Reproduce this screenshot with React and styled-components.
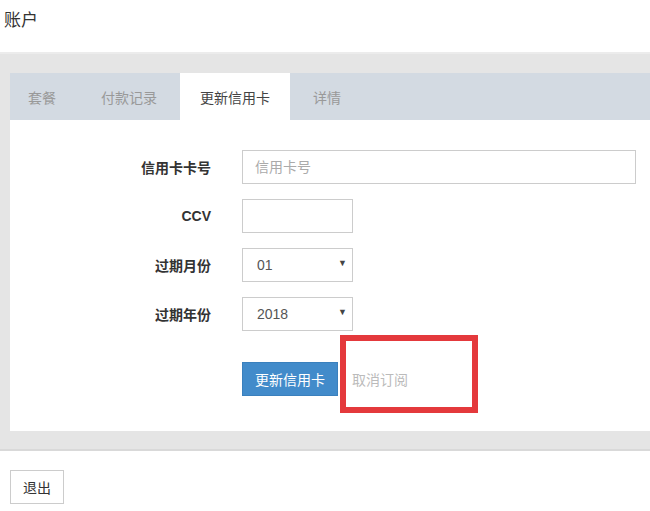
import React from 'react';
import styled, { createGlobalStyle } from 'styled-components';

const GlobalStyle = createGlobalStyle`
  body {
    margin: 0;
    background: #fff;
    font-family: "Liberation Sans", "Noto Sans CJK SC", sans-serif;
    font-size: 14px;
    color: #333;
  }
`;

const Page = styled.div`
  width: 650px;
  overflow: hidden;
`;

const Title = styled.h1`
  margin: 0;
  height: 52px;
  padding: 6px 0 0 4px;
  box-sizing: border-box;
  font-size: 17px;
  font-weight: normal;
  color: #333;
`;

const Band = styled.div`
  background: #e5e5e5;
  border-top: 2px solid #ececec;
  border-bottom: 2px solid #d9d9d9;
  padding: 19px 0 18px 10px;
`;

const Panel = styled.div`
  background: #fff;
  width: 660px;
`;

const TabBar = styled.div`
  display: flex;
  height: 47px;
  background: #d3dae2;
`;

const Tab = styled.div`
  display: flex;
  align-items: center;
  padding: 0 20px;
  margin-right: 3px;
  font-size: 14px;
  color: ${(p) => (p.$active ? '#444' : '#999')};
  background: ${(p) => (p.$active ? '#fff' : 'transparent')};
  &:first-child {
    padding-left: 18px;
  }
  &:nth-child(2) {
    padding-left: 22px;
  }
`;

const Form = styled.form`
  display: grid;
  grid-template-columns: 201px 1fr;
  column-gap: 31px;
  row-gap: 15px;
  padding: 30px 34px 35px 0;
`;

const Label = styled.label`
  align-self: center;
  text-align: right;
  font-weight: bold;
  font-size: 14px;
  color: #333;
`;

const Input = styled.input`
  box-sizing: border-box;
  height: 34px;
  width: ${(p) => p.$width || '100%'};
  padding: 6px 12px;
  border: 1px solid #ccc;
  font-family: inherit;
  font-size: 14px;
  color: #555;
  outline: none;
  &::placeholder {
    color: #aaa;
  }
`;

const SelectWrap = styled.div`
  position: relative;
  width: 111px;
  height: 34px;
`;

const Select = styled.select`
  box-sizing: border-box;
  appearance: none;
  width: 100%;
  height: 34px;
  padding: 0 14px;
  border: 1px solid #ccc;
  background: #fff;
  font-family: inherit;
  font-size: 14px;
  color: #555;
  outline: none;
`;

const Arrow = styled.span`
  position: absolute;
  right: 6px;
  top: 10px;
  font-size: 9px;
  color: #444;
  pointer-events: none;
`;

const Actions = styled.div`
  grid-column: 2;
  display: flex;
  align-items: center;
  margin-top: 16px;
`;

const PrimaryButton = styled.button`
  height: 34px;
  padding: 0 12px;
  border: 1px solid #3a80bd;
  background: #428bca;
  color: #fff;
  font-family: inherit;
  font-size: 14px;
`;

const CancelLink = styled.span`
  position: relative;
  margin-left: 14px;
  color: #bbb;
  font-size: 14px;
`;

const Highlight = styled.span`
  position: absolute;
  left: -12px;
  top: -34px;
  width: 126px;
  height: 66px;
  border: 6px solid #e4393c;
`;

const Footer = styled.div`
  padding: 19px 0 0 10px;
`;

const DefaultButton = styled.button`
  height: 34px;
  padding: 0 12px;
  border: 1px solid #ccc;
  background: #fff;
  color: #333;
  font-family: inherit;
  font-size: 14px;
`;

const tabs = ['套餐', '付款记录', '更新信用卡', '详情'];

const App = () => (
  <Page>
    <GlobalStyle />
    <Title>账户</Title>
    <Band>
      <Panel>
        <TabBar>
          {tabs.map((t) => (
            <Tab key={t} $active={t === '更新信用卡'}>{t}</Tab>
          ))}
        </TabBar>
        <Form onSubmit={(e) => e.preventDefault()}>
          <Label>信用卡卡号</Label>
          <Input placeholder="信用卡号" />
          <Label>CCV</Label>
          <Input $width="111px" />
          <Label>过期月份</Label>
          <SelectWrap>
            <Select defaultValue="01">
              <option>01</option>
            </Select>
            <Arrow>▼</Arrow>
          </SelectWrap>
          <Label>过期年份</Label>
          <SelectWrap>
            <Select defaultValue="2018">
              <option>2018</option>
            </Select>
            <Arrow>▼</Arrow>
          </SelectWrap>
          <Actions>
            <PrimaryButton type="submit">更新信用卡</PrimaryButton>
            <CancelLink>
              取消订阅
              <Highlight />
            </CancelLink>
          </Actions>
        </Form>
      </Panel>
    </Band>
    <Footer>
      <DefaultButton>退出</DefaultButton>
    </Footer>
  </Page>
);

export default App;
